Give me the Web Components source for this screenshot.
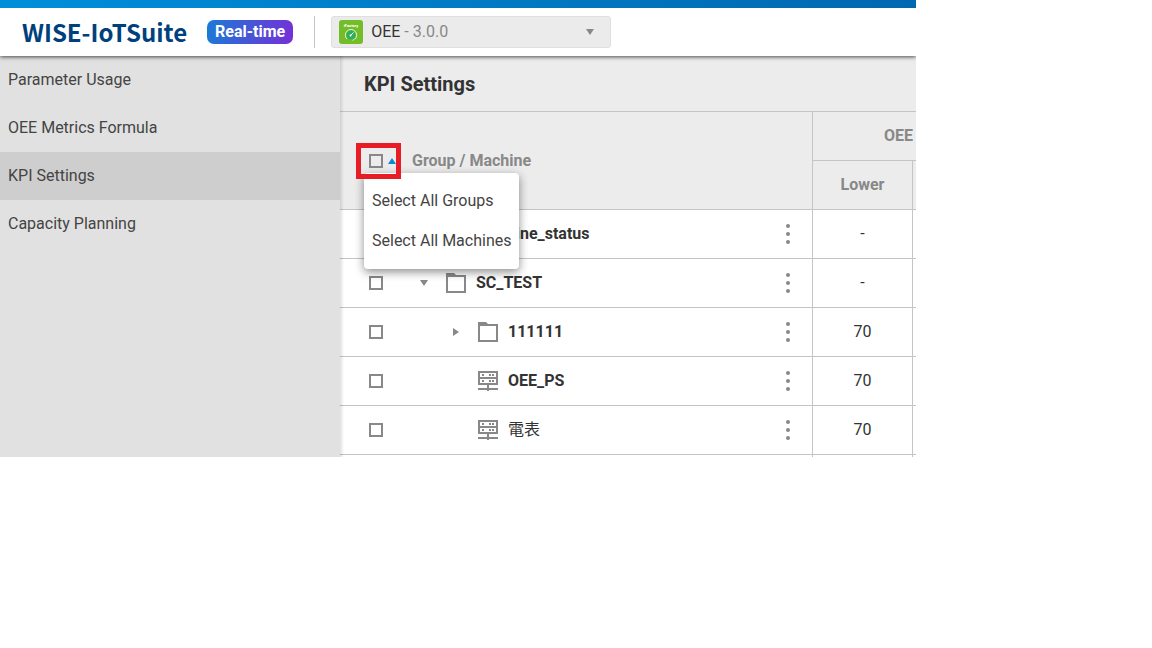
<!DOCTYPE html>
<html lang="en">
<head>
<meta charset="utf-8">
<meta name="viewport" content="width=device-width, initial-scale=1">
<title>WISE-IoTSuite - KPI Settings</title>
<style>
  body { margin: 0; background: #fff; font: 16px/24px Roboto, "Noto Sans CJK TC", sans-serif; color: #333; }
</style>
</head>
<body>
<oee-app>
  <top-bar slot="header"></top-bar>
  <side-nav slot="nav">
    <nav-item>Parameter Usage</nav-item>
    <nav-item>OEE Metrics Formula</nav-item>
    <nav-item active>KPI Settings</nav-item>
    <nav-item>Capacity Planning</nav-item>
  </side-nav>
  <kpi-panel><span slot="title">KPI Settings</span></kpi-panel>
</oee-app>
<script>
const define = (name, html, setup) => customElements.define(name, class extends HTMLElement {
  constructor() {
    super();
    const t = document.createElement('template');
    t.innerHTML = html;
    this.attachShadow({ mode: 'open' }).append(t.content.cloneNode(true));
  }
  connectedCallback() { if (setup) setup(this, this.shadowRoot); }
});

const ICONS = {
  folder: '<svg width="24" height="24" viewBox="0 0 24 24"><path fill="#888" fill-rule="evenodd" d="M2 2h8l2 2h10v18H2zM4 6v14h16V6z"/></svg>',
  machine: '<svg width="24" height="24" viewBox="0 0 24 24" fill="#888"><path fill-rule="evenodd" d="M2 2h20v14h-9v3h9v2h-9v1h-2v-1H2v-2h9v-3H2zM4 4v4h16V4zM4 10v4h16v-4z"/><path d="M6 5h2v2H6zM13 5h2v2h-2zM16 5h2v2h-2zM6 11h2v2H6zM13 11h2v2h-2zM16 11h2v2h-2z"/></svg>',
  down: '<svg width="24" height="24" viewBox="0 0 24 24"><path fill="#888" d="M8 9h8l-4 6z"/></svg>',
  right: '<svg width="24" height="24" viewBox="0 0 24 24"><path fill="#888" d="M9 8v8l6-4z"/></svg>',
  up: '<svg width="8" height="8" viewBox="0 0 8 8"><path fill="#0a87d0" d="M0 7h8L4 1z"/></svg>',
  more: '<svg width="24" height="24" viewBox="0 0 24 24" fill="#888"><circle cx="12" cy="4" r="2"/><circle cx="12" cy="12" r="2"/><circle cx="12" cy="20" r="2"/></svg>',
  app: '<svg width="24" height="24" viewBox="0 0 24 24"><rect width="24" height="24" rx="3" fill="#73bd28"/><text x="12" y="7" text-anchor="middle" font-family="Roboto, sans-serif" font-weight="700" font-size="4" fill="#fff">iFactory</text><circle cx="12" cy="15" r="4.500" fill="#2eaf62"/><path fill="none" stroke="#d9f3d0" d="M8 19.200a5.700 5.700 0 1 1 8 0M13.500 20.500l2-1.500"/><path stroke="#fff" d="m11.500 15.500 3-3"/><circle cx="11.500" cy="15.500" r="1" fill="#fff"/></svg>'
};

define('ui-icon', '<style>:host{display:block;flex:none}svg{display:block}</style><div></div>',
  (el, root) => { root.querySelector('div').innerHTML = ICONS[el.getAttribute('name')] || ''; });

define('ui-checkbox', `
  <style>
    :host { display: flex; flex: none; width: 24px; height: 24px; align-items: center; justify-content: center; }
    input { appearance: none; box-sizing: border-box; width: 14px; height: 14px; margin: 0; border: 2px solid #888; }
    input:checked { background: #888; }
  </style><input type="checkbox">`,
  (el, root) => root.querySelector('input').setAttribute('aria-label', el.getAttribute('label')));

define('oee-app', `
  <style>
    :host { display: block; margin-right: 236px; overflow: hidden; }
    .body { display: grid; grid-template-columns: 340px minmax(0, 1fr); }
  </style>
  <slot name="header"></slot>
  <div class="body"><slot name="nav"></slot><slot></slot></div>`);

define('top-bar', `
  <style>
    :host { display: block; position: relative; z-index: 2; background: #fff; box-shadow: 0 1px 4px rgba(0,0,0,.7); }
    .stripe { height: 8px; background: linear-gradient(90deg, #008edb, #0068b0); }
    header { display: flex; align-items: center; height: 48px; padding-left: 22px; }
    .brand { flex: none; color: #00417d; font: 700 24px/32px "Noto Sans CJK SC", sans-serif; text-decoration: none; width: 166px; white-space: nowrap; }
    .badge { flex: none; margin-left: 19px; padding: 0 8px; border-radius: 7px; color: #fff; font-weight: 700; background: linear-gradient(100deg, #1a7bd6, #752fd8); }
    .rule { flex: none; width: 1px; height: 32px; margin: 0 16px 0 21px; background: #c4c4c4; }
    .app { box-sizing: border-box; display: flex; align-items: center; width: 280px; height: 32px; padding: 0 8px 0 7px; border: 1px solid #dfdfdf; border-radius: 3px; background: #ebebeb; }
    label { margin-left: 8px; }
    select { appearance: none; flex: 1; min-width: 0; margin: 0 0 0 4px; padding: 0; border: 0; background: none; color: #888; font: inherit; }
  </style>
  <div class="stripe"></div>
  <header>
    <a class="brand" href="#">WISE-IoTSuite</a>
    <span class="badge">Real-time</span>
    <span class="rule"></span>
    <div class="app">
      <ui-icon name="app"></ui-icon>
      <label for="version">OEE</label>
      <select id="version"><option>- 3.0.0</option></select>
      <ui-icon name="down"></ui-icon>
    </div>
  </header>`);

define('side-nav', '<style>:host{display:block;background:#e1e1e1;color:#444}</style><nav><slot></slot></nav>');

define('nav-item', `
  <style>
    :host { display: block; }
    :host([active]) { background: #cecece; }
    a { display: block; padding: 12px 8px; line-height: 24px; color: inherit; text-decoration: none; }
  </style><a href="#"><slot></slot></a>`);

define('select-menu', `
  <style>
    :host { display: block; box-sizing: border-box; padding: 8px 0; background: #fff; border-radius: 4px; box-shadow: 0 3px 10px rgba(0,0,0,.45); }
    button { display: block; width: 100%; padding: 8px; border: 0; background: none; color: #444; font: inherit; line-height: 24px; text-align: left; white-space: nowrap; }
  </style>
  <div role="menu"><button role="menuitem">Select All Groups</button><button role="menuitem">Select All Machines</button></div>`);

define('tree-cell', `
  <style>
    :host { display: flex; align-items: center; padding: 0 12px 0 24px; }
    .indent { flex: none; width: 24px; }
    :host([level="2"]) .indent { width: 56px; }
    .toggle { flex: none; width: 24px; height: 24px; padding: 0; margin-right: 8px; border: 0; background: none; }
    .name { flex: 1; margin-left: 8px; font-weight: 700; }
    :host([light]) .name { font-weight: 400; }
    .more { padding: 0; border: 0; background: none; }
  </style>
  <ui-checkbox></ui-checkbox><span class="indent"></span>
  <button class="toggle" aria-label="Toggle"></button>
  <ui-icon class="kind"></ui-icon><span class="name"><slot></slot></span>
  <button class="more" aria-label="More"><ui-icon name="more"></ui-icon></button>`,
  (el, root) => {
    root.querySelector('.toggle').innerHTML = '<ui-icon name="' + (el.getAttribute('toggle') || 'none') + '"></ui-icon>';
    const kind = document.createElement('ui-icon');
    kind.setAttribute('name', el.getAttribute('kind'));
    root.querySelector('.kind').replaceWith(kind);
    root.querySelector('ui-checkbox').shadowRoot.querySelector('input').setAttribute('aria-label', 'Select ' + el.textContent);
  });

define('kpi-panel', `
  <style>
    :host { display: block; position: relative; background: #ececec; }
    :host::before { content: ""; position: absolute; z-index: 1; left: 0; top: 0; bottom: 0; width: 4px; background: linear-gradient(90deg, rgba(0,0,0,.12), transparent); }
    h1 { box-sizing: border-box; height: 56px; margin: 0; padding: 16px 24px 15px; border-bottom: 1px solid #c4c4c4; font-size: 20px; line-height: 24px; font-weight: 700; }
    table { width: 100%; table-layout: fixed; border-collapse: separate; border-spacing: 0; }
    .lower { width: 100px; } .next { width: 3px; }
    th, td { box-sizing: border-box; height: 49px; padding: 0; border-bottom: 1px solid #c4c4c4; border-right: 1px solid #c4c4c4; text-align: center; }
    th { color: #888; font-weight: 700; }
    tr > :last-child { border-right: 0; }
    tbody { background: #fff; }
    td:first-child { text-align: left; }
    .oee { padding-right: 3px; text-align: right; }
    .tail td { height: 2px; border-bottom: 0; }
    .head { position: relative; display: flex; align-items: center; padding-left: 24px; }
    .head span { margin-left: 16px; }
    .sort { display: block; padding: 0; border: 0; background: none; }
    .mark { position: absolute; z-index: 4; left: 16px; top: -6px; box-sizing: border-box; width: 45px; height: 36px; border: 5px solid #e81c24; pointer-events: none; }
    select-menu { position: absolute; z-index: 3; left: 24px; top: 24px; font-weight: 400; }
  </style>
  <h1><slot name="title"></slot></h1>
  <table>
    <colgroup><col><col class="lower"><col class="next"></colgroup>
    <thead>
      <tr><th rowspan="2"><div class="head">
        <ui-checkbox label="Select all"></ui-checkbox>
        <button class="sort" aria-label="Selection menu"><ui-icon name="up"></ui-icon></button>
        <span>Group / Machine</span>
        <select-menu></select-menu><div class="mark"></div>
      </div></th><th class="oee" colspan="2">OEE</th></tr>
      <tr><th>Lower</th><th></th></tr>
    </thead>
    <tbody>
      <tr><td><tree-cell kind="folder" toggle="right">machine_status</tree-cell></td><td>-</td><td></td></tr>
      <tr><td><tree-cell kind="folder" toggle="down">SC_TEST</tree-cell></td><td>-</td><td></td></tr>
      <tr><td><tree-cell level="2" kind="folder" toggle="right">111111</tree-cell></td><td>70</td><td></td></tr>
      <tr><td><tree-cell level="2" kind="machine">OEE_PS</tree-cell></td><td>70</td><td></td></tr>
      <tr><td><tree-cell level="2" kind="machine" light>電表</tree-cell></td><td>70</td><td></td></tr>
      <tr class="tail"><td></td><td></td><td></td></tr>
    </tbody>
  </table>`);
</script>
</body>
</html>
